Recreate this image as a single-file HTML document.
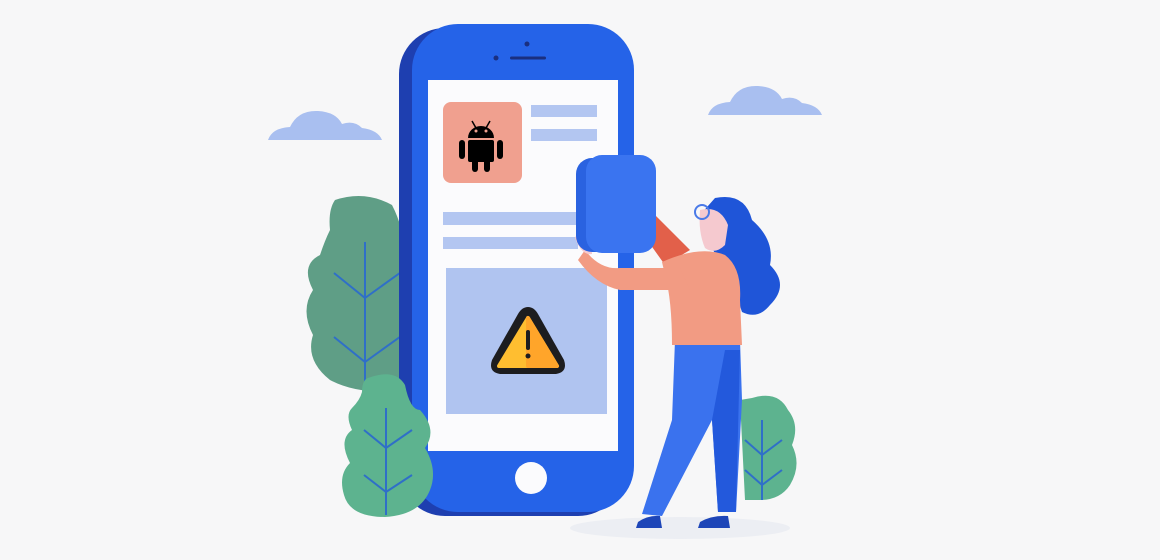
<!DOCTYPE html><html><head><style>html,body{margin:0;padding:0;background:#f7f7f8}svg{display:block}</style></head><body>
<svg width="1160" height="560" viewBox="0 0 1160 560" xmlns="http://www.w3.org/2000/svg">
<rect width="1160" height="560" fill="#f7f7f8"/>
<path d="M268 140 Q272 128 290 127 Q298 110 318 111 Q336 112 342 124 Q354 120 362 128 Q378 130 382 140 Z" fill="#a9bff0"/>
<path d="M708 115 Q712 103 730 102 Q738 85 758 86 Q776 87 782 99 Q794 95 802 103 Q818 105 822 115 Z" fill="#a9bff0"/>
<ellipse cx="680" cy="528" rx="110" ry="11" fill="#eceef3"/>
<path d="M335 200 Q365 190 392 205 Q405 230 405 260 L408 390 Q360 396 330 380 Q305 360 313 335 Q300 310 313 290 Q300 265 320 255 Q325 240 330 230 Q328 210 335 200Z" fill="#5f9e86"/>
<g stroke="#2f6fc8" stroke-width="2" fill="none"><path d="M365 242 V390 M334 273 L365 298 L404 270 M334 337 L365 362 L404 334"/></g>
<path d="M752 398 Q778 390 788 410 Q800 425 792 445 Q802 465 790 485 Q780 500 760 500 L745 500 L740 400Z" fill="#5db38f"/>
<g stroke="#2f6fc8" stroke-width="2" fill="none"><path d="M762 420 V500 M745 440 L762 455 L782 440 M745 470 L762 485 L782 470"/></g>
<rect x="399" y="28" width="225" height="488" rx="46" fill="#1e3fb0"/>
<rect x="412" y="24" width="222" height="488" rx="46" fill="#2563e8"/>
<rect x="428" y="80" width="190" height="371" fill="#fbfbfd"/>
<circle cx="527" cy="44" r="2.5" fill="#1a2f80"/>
<circle cx="496" cy="58" r="2.5" fill="#1a2f80"/>
<rect x="510" y="56.5" width="36" height="3" rx="1.5" fill="#1a2f80"/>
<circle cx="531" cy="478" r="16" fill="#fbfbfd"/>
<rect x="443" y="102" width="79" height="81" rx="8" fill="#f0a08f"/>
<rect x="531" y="105" width="66" height="12" fill="#b3c6f1"/>
<rect x="531" y="129" width="66" height="12" fill="#b3c6f1"/>
<rect x="443" y="212" width="135" height="13" fill="#b3c6f1"/>
<rect x="443" y="237" width="135" height="12" fill="#b3c6f1"/>
<rect x="446" y="268" width="161" height="146" fill="#b0c4f0"/>
<g fill="#000">
<path d="M468 138 A13 12 0 0 1 494 138 Z"/>
<rect x="468" y="140" width="26" height="22" rx="2"/>
<rect x="459" y="140" width="6" height="19" rx="3"/>
<rect x="497" y="140" width="6" height="19" rx="3"/>
<rect x="472" y="158" width="6" height="14" rx="3"/>
<rect x="484" y="158" width="6" height="14" rx="3"/>
<path d="M472 121 L476 128 M490 121 L486 128" stroke="#000" stroke-width="1.5"/>
</g>
<circle cx="476" cy="131" r="1.5" fill="#f0a08f"/><circle cx="486" cy="131" r="1.5" fill="#f0a08f"/>
<path d="M528 307 Q534 307 538 314 L564 360 Q568 372 556 374 L500 374 Q488 372 492 360 L518 314 Q522 307 528 307Z" fill="#1d1d1f"/>
<path d="M528 318 L557 366 L499 366 Z" fill="#ffbe30" stroke="#ffbe30" stroke-width="4" stroke-linejoin="round"/>
<path d="M528 318 L557 366 L528 366 Z" fill="#ffa52a" stroke="#ffa52a" stroke-width="4" stroke-linejoin="round"/>
<rect x="526" y="330" width="4" height="20" rx="2" fill="#1d1d1f"/>
<circle cx="528" cy="356" r="2.5" fill="#1d1d1f"/>
<path d="M368 378 Q395 368 405 385 Q410 410 420 410 Q438 430 425 448 Q438 470 430 490 Q420 515 385 517 Q350 517 344 495 Q338 475 350 463 Q338 440 352 430 Q345 415 352 408 Q360 400 362 392 Q362 380 368 378Z" fill="#5db38f"/>
<g stroke="#2f6fc8" stroke-width="2" fill="none"><path d="M386 408 V515 M364 430 L386 448 L412 430 M364 475 L386 492 L412 475"/></g>
<!-- woman -->
<path d="M715 198 Q745 192 752 220 Q775 240 770 265 Q790 285 770 305 Q758 320 742 312 Q735 290 725 270 Q705 240 700 215Z" fill="#1f55d8"/>
<path d="M675 340 L740 340 L742 400 L736 512 L718 512 L712 420 L662 516 L642 514 L672 420Z" fill="#3a72ee"/>
<path d="M712 420 L725 350 L740 350 L736 512 L718 512Z" fill="#2359dc"/>
<path d="M638 522 Q648 515 660 516 L662 528 L636 528Z M700 522 Q712 515 728 516 L730 528 L698 528Z" fill="#1e46b8"/>
<path d="M650 210 L690 250 L665 265 L640 230Z" fill="#e2604a"/>
<path d="M662 262 Q700 245 725 255 Q742 268 740 300 L742 345 L672 345 Q672 300 665 275Z" fill="#f29b83"/>
<path d="M585 250 Q600 270 620 268 L680 268 L690 290 L620 290 Q596 285 578 260Z" fill="#f29b83"/>
<path d="M700 210 Q720 205 728 225 L725 245 Q715 255 705 248 Q698 232 700 210Z" fill="#f5c9cf"/>
<circle cx="702" cy="212" r="7" fill="none" stroke="#4a7ae8" stroke-width="2"/>
<path d="M575 238 Q580 226 590 228 L592 254 Q582 256 575 238Z" fill="#f5c9cf"/>
<rect x="576" y="158" width="68" height="94" rx="16" fill="#2a62e0"/>
<rect x="586" y="155" width="70" height="98" rx="16" fill="#3a74f0"/>
</svg>
</body></html>
